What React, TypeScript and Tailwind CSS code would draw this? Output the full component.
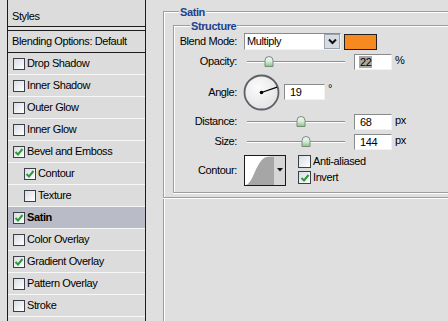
import React from "react";

const styles: { label: string; checked: boolean; indent?: boolean; active?: boolean }[] = [
  { label: "Drop Shadow", checked: false },
  { label: "Inner Shadow", checked: false },
  { label: "Outer Glow", checked: false },
  { label: "Inner Glow", checked: false },
  { label: "Bevel and Emboss", checked: true },
  { label: "Contour", checked: true, indent: true },
  { label: "Texture", checked: false, indent: true },
  { label: "Satin", checked: true, active: true },
  { label: "Color Overlay", checked: false },
  { label: "Gradient Overlay", checked: true },
  { label: "Pattern Overlay", checked: false },
  { label: "Stroke", checked: false },
  { label: "", checked: false },
];

function Check({ checked, size = 12 }: { checked: boolean; size?: number }) {
  return (
    <span
      className="flex shrink-0 items-center justify-center border border-[#3a3f48] bg-gradient-to-br from-[#d9dde3] to-white"
      style={{ width: size, height: size }}
    >
      {checked && (
        <svg width="10" height="10" viewBox="0 0 10 10">
          <path d="M1.5 5 L4 7.5 L8.5 2" fill="none" stroke="#2f9a3a" strokeWidth="2" />
        </svg>
      )}
    </span>
  );
}

function NumBox({ value, width, selected }: { value: string; width: string; selected?: boolean }) {
  return (
    <div
      className={`flex h-[16px] items-center border border-[#8a8a8a] border-b-[#f2f2f2] border-r-[#f2f2f2] bg-white pl-[4px] ${width}`}
    >
      <span className={selected ? "bg-[#a9a9a9] px-px leading-[12px]" : "px-px leading-[12px]"}>{value}</span>
    </div>
  );
}

function Slider({ pos }: { pos: number }) {
  return (
    <div className="relative flex h-full w-[110px] items-center pl-[3px] pr-[9px]">
      <div className="h-[2px] w-full border-t border-[#8e8e8e] bg-white" />
      <svg
        className="absolute top-[3px]"
        style={{ left: 3 + pos - 5 }}
        width="10"
        height="11"
        viewBox="0 0 10 11"
      >
        <defs>
          <linearGradient id="thumb" x1="0" y1="0" x2="0" y2="1">
            <stop offset="0" stopColor="#f6f6f6" />
            <stop offset="0.5" stopColor="#d6ecd6" />
            <stop offset="1" stopColor="#7fc67f" />
          </linearGradient>
        </defs>
        <path d="M1 4.5 Q1 0.5 5 0.5 Q9 0.5 9 4.5 L9 10.5 L1 10.5 Z" fill="url(#thumb)" stroke="#7d8a7d" />
      </svg>
    </div>
  );
}

export default function App() {
  const angle = (19 * Math.PI) / 180;

  return (
    <div className="flex h-[321px] w-[448px] overflow-hidden bg-[#dfdfdf] font-['Liberation_Sans',Arial,sans-serif] text-[11px] tracking-[-0.4px] text-black">

      {/* Styles list */}

      <div className="ml-[7px] flex w-[139px] shrink-0 flex-col border-x border-[#1c1c1c] bg-[#dcdcdc]">

        <div className="flex h-[27px] shrink-0 items-center border-b border-[#1c1c1c] pl-[4px] pt-[6px]">
          Styles
        </div>

        <div className="h-[3px] shrink-0 bg-[#e4e4e4]" />

        <div className="flex h-[23px] shrink-0 items-center border-y border-[#1c1c1c] pl-[4px]">
          Blending Options: Default
        </div>

        {styles.map((s, i) => (
          <div
            key={i}
            className={`flex h-[22px] shrink-0 items-center gap-[2px] border-b border-[#f7f7f7] ${
              s.indent ? "pl-[16px]" : "pl-[5px]"
            } ${s.active ? "bg-[#b9bcc7] font-bold" : ""}`}
          >
            {s.label && <Check checked={s.checked} />}
            <span>{s.label}</span>
          </div>
        ))}

      </div>

      {/* Satin settings */}

      <div className="flex flex-1 flex-col pl-[17px] pt-[11px]">

        <div className="relative border-y border-l border-[#9d9d9d] pl-[9px] pt-[13px] pb-[4px] shadow-[inset_1px_1px_0_#fff,0_1px_0_#fff]">

          <span className="absolute left-[15px] top-[-8px] bg-[#dfdfdf] px-[1px] font-bold text-[#1e3f8c]">
            Satin
          </span>

          <div className="relative flex flex-col border-y border-l border-[#9d9d9d] pb-[6px] shadow-[inset_1px_1px_0_#fff,0_1px_0_#fff]">

            <span className="absolute left-[16px] top-[-8px] bg-[#dfdfdf] px-[1px] font-bold text-[#1e3f8c]">
              Structure
            </span>

            {/* Blend mode */}

            <div className="mt-[7px] flex h-[17px] items-center">
              <span className="w-[64px] pr-[1px] text-right">Blend Mode:</span>
              <div className="ml-[6px] flex h-[17px] w-[97px] items-center border border-[#8a8a8a] border-b-[#f2f2f2] border-r-[#f2f2f2] bg-white">
                <span className="flex-1 pl-[2px]">Multiply</span>
                <span className="flex h-[15px] w-[16px] items-center justify-center border border-[#9aa2ae] bg-[#d7dbe3]">
                  <svg width="9" height="7" viewBox="0 0 9 7">
                    <path d="M1 1.5 L4.5 5 L8 1.5" fill="none" stroke="#111" strokeWidth="2" />
                  </svg>
                </span>
              </div>
              <div className="ml-[3px] h-[16px] w-[33px] border border-[#202020] bg-[#f6891f]" />
            </div>

            {/* Opacity */}

            <div className="mt-[3px] flex h-[17px] items-center">
              <span className="w-[64px] pr-[1px] text-right">Opacity:</span>
              <div className="ml-[6px] flex h-full items-center">
                <Slider pos={22} />
                <NumBox value="22" width="w-[38px]" selected />
                <span className="ml-[3px] -mt-[2px]">%</span>
              </div>
            </div>

            {/* Angle */}

            <div className="mt-[4px] flex h-[36px] items-center">
              <span className="w-[64px] pr-[1px] text-right">Angle:</span>
              <div className="ml-[5px] flex h-full items-center">
                <svg width="37" height="37" viewBox="0 0 37 37">
                  <defs>
                    <radialGradient id="dial" cx="0.4" cy="0.35" r="0.7">
                      <stop offset="0" stopColor="#fbfbfb" />
                      <stop offset="1" stopColor="#e2e2e4" />
                    </radialGradient>
                  </defs>
                  <circle cx="18.5" cy="18.5" r="17" fill="url(#dial)" stroke="#5e6066" strokeWidth="1.8" />
                  <line
                    x1="18.5"
                    y1="18.5"
                    x2={18.5 + 16.5 * Math.cos(angle)}
                    y2={18.5 - 16.5 * Math.sin(angle)}
                    stroke="#000"
                    strokeWidth="1.2"
                  />
                  <circle cx="18.5" cy="18.5" r="1.8" fill="#000" />
                </svg>
                <div className="ml-[4px]">
                  <NumBox value="19" width="w-[41px]" />
                </div>
                <span className="ml-[3px] -mt-[8px]">°</span>
              </div>
            </div>

            {/* Distance */}

            <div className="mt-[3px] flex h-[17px] items-center">
              <span className="w-[64px] pr-[1px] text-right">Distance:</span>
              <div className="ml-[6px] flex h-full items-center">
                <Slider pos={53.5} />
                <NumBox value="68" width="w-[38px]" />
                <span className="ml-[3px] -mt-[2px]">px</span>
              </div>
            </div>

            {/* Size */}

            <div className="mt-[3px] flex h-[17px] items-center">
              <span className="w-[64px] pr-[1px] text-right">Size:</span>
              <div className="ml-[6px] flex h-full items-center">
                <Slider pos={59} />
                <NumBox value="144" width="w-[38px]" />
                <span className="ml-[3px] -mt-[2px]">px</span>
              </div>
            </div>

            {/* Contour */}

            <div className="mt-[4px] flex h-[32px] items-center">
              <span className="w-[64px] pr-[1px] text-right">Contour:</span>
              <div className="ml-[6px] flex h-[31px] w-[42px] border border-[#1a1a1a] bg-white">
                <svg width="29" height="29" viewBox="0 0 29 29">
                  <path d="M1 29 C 8 27, 10 9, 19 2 C 21 0.5, 24 0.5, 29 0.5 L29 29 Z" fill="#a6a6a6" />
                </svg>
                <div className="flex flex-1 items-center justify-center bg-[#d6d6d6]">
                  <svg width="6" height="4" viewBox="0 0 6 4">
                    <path d="M0 0 L6 0 L3 3.5 Z" fill="#111" />
                  </svg>
                </div>
              </div>
              <div className="ml-[12px] flex flex-col gap-[3px] self-start pt-[1px]">
                <label className="flex h-[13px] items-center gap-[2px]">
                  <Check checked={false} size={13} />
                  Anti-aliased
                </label>
                <label className="flex h-[13px] items-center gap-[2px]">
                  <Check checked size={13} />
                  Invert
                </label>
              </div>
            </div>

          </div>

        </div>

        <div className="flex-1 border-l border-[#9d9d9d] shadow-[inset_1px_0_0_#fff]" />

      </div>

    </div>
  );
}
